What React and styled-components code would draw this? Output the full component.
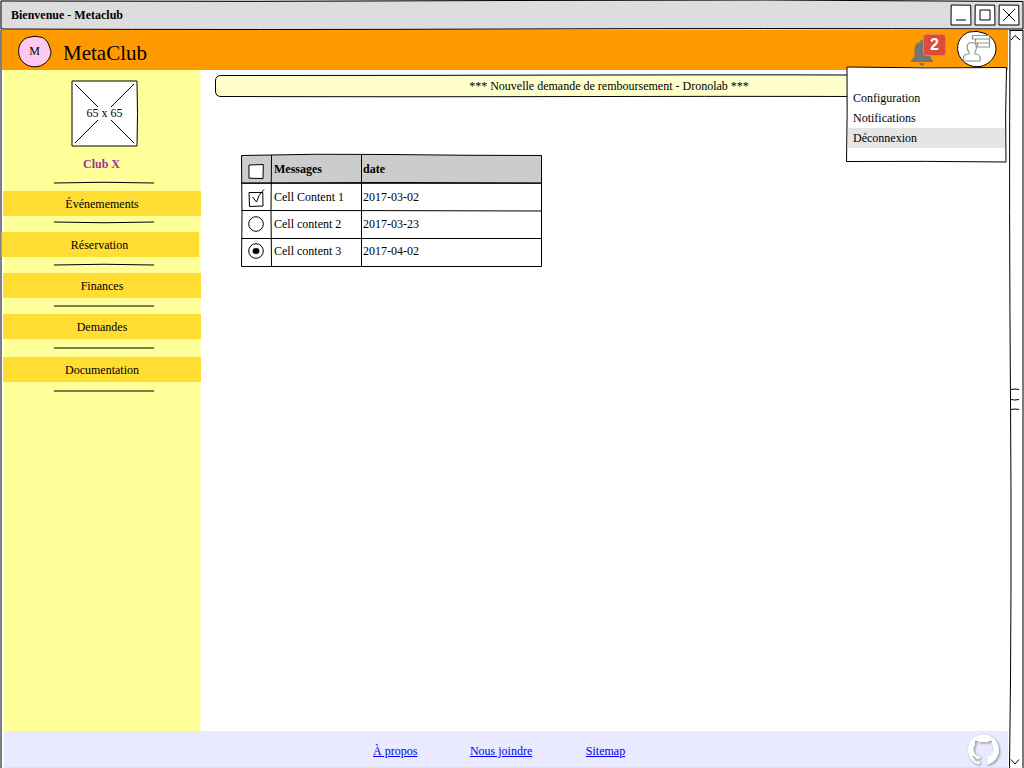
import React from 'react';
import styled, { createGlobalStyle } from 'styled-components';
import { SiGithub } from 'react-icons/si';

const GlobalStyle = createGlobalStyle`
  * { box-sizing: border-box; }
  body {
    margin: 0;
    overflow: hidden;
    background: #fff;
    color: #000;
    font-family: "Liberation Serif", "Times New Roman", serif;
    font-size: 12px;
  }
`;

const Window = styled.div`
  display: flex;
  flex-direction: column;
  width: 1024px;
  height: 768px;
  overflow: hidden;
  background: #fff;
`;

const TitleBar = styled.header`
  position: relative;
  flex: none;
  display: flex;
  align-items: center;
  justify-content: space-between;
  height: 30px;
  padding: 0 4px 0 11px;
  background: #ddd;
  font-weight: bold;
`;

const Controls = styled.div`
  position: relative;
  display: flex;
  gap: 2px;
`;

const Outline = styled.svg`
  position: absolute;
  top: 0;
  left: 0;
  fill: none;
  stroke: #000;
  stroke-width: 1;
  overflow: visible;
  pointer-events: none;
`;

const Drawing = styled.svg`
  display: block;
  flex: none;
  fill: none;
  stroke: #000;
  stroke-width: 1;
  overflow: visible;
`;

const Viewport = styled.div`
  display: flex;
  flex: 1;
  min-height: 0;
`;

const LeftFrame = styled.div`
  width: 2px;
  background: #7f7f7f;
`;

const Page = styled.div`
  display: flex;
  flex-direction: column;
  width: 1007px;
`;

const TopBar = styled.div`
  position: relative;
  z-index: 1;
  flex: none;
  display: flex;
  align-items: flex-start;
  width: 1006px;
  height: 40px;
  padding-left: 16px;
  background: #ff9900;
`;

const Logo = styled.div`
  position: relative;
  display: flex;
  justify-content: center;
  width: 33px;
  margin-top: 6px;
  line-height: 31px;
`;

const LogoLetter = styled.span`
  position: relative;
`;

const Brand = styled.div`
  margin-left: 12px;
  font-size: 21px;
  line-height: 46px;
`;

const Bell = styled.div`
  position: relative;
  margin: 9px 0 0 auto;
  width: 22px;
  height: 28px;
`;

const Badge = styled.div`
  position: absolute;
  top: -5px;
  left: 12px;
  width: 23px;
  height: 22px;
  border: 1px solid #f07a55;
  border-radius: 3px;
  background: #dd4b39;
  color: #fff;
  font: bold 16px/20px "Liberation Sans", sans-serif;
  text-align: center;
`;

const Avatar = styled.div`
  margin: 0 11px 0 24px;
`;

const Menu = styled.div`
  position: absolute;
  top: 37px;
  left: 845px;
  width: 160px;
  height: 95px;
  padding: 21px 2px 0 1px;
  background: #fff;
`;

const MenuItem = styled.div`
  height: 20px;
  padding-left: 5px;
  line-height: 20px;
  background: ${(p) => (p.$active ? '#e5e5e5' : 'transparent')};
`;

const Columns = styled.div`
  display: flex;
  flex: 1;
`;

const Sidebar = styled.aside`
  display: flex;
  flex-direction: column;
  width: 199px;
  padding-top: 11px;
  background: linear-gradient(to right, #fff 2px, #ffff99 2px, #ffff99 198px, #ffffcc 198px);
`;

const Picture = styled.div`
  position: relative;
  width: 65px;
  height: 65px;
  margin-left: 70px;
  background: #fff;
  line-height: 65px;
  text-align: center;
`;

const ClubName = styled.div`
  width: 199px;
  margin: 11px 0 12px;
  color: #993399;
  font-weight: bold;
  line-height: 14px;
  text-align: center;
`;

const Rule = styled(Drawing)`
  margin: -1px 0 -1px 52px;
`;

const NavItem = styled.a`
  height: 25px;
  margin: ${(p) => p.$before}px 0 ${(p) => p.$after}px ${(p) => (p.$shifted ? -1 : 1)}px;
  padding-right: ${(p) => (p.$shifted ? 1 : 0)}px;
  width: 198px;
  background: ${(p) => (p.$shifted ? 'linear-gradient(to right, #c0ad5b 1px, #ffdd33 1px)' : '#ffdd33')};
  line-height: 27px;
  text-align: center;
`;

const Content = styled.main`
  flex: 1;
  padding: 5px 0 0 14px;
`;

const Notice = styled.div`
  position: relative;
  width: 788px;
  height: 22px;
  border-radius: 6px;
  background: #ffffcc;
  line-height: 23px;
  text-align: center;
`;

const NoticeText = styled.span`
  position: relative;
`;

const Table = styled.div`
  position: relative;
  width: 300px;
  margin: 58px 0 0 26px;
`;

const Row = styled.div`
  display: grid;
  grid-template-columns: 30px 90px 180px;
  height: ${(p) => p.$h}px;
  line-height: ${(p) => p.$lh}px;
  background: ${(p) => (p.$head ? '#ccc' : '#fff')};
  font-weight: ${(p) => (p.$head ? 'bold' : 'normal')};
`;

const Cell = styled.div`
  padding-left: ${(p) => p.$pad}px;
`;

const Footer = styled.footer`
  position: relative;
  flex: none;
  display: flex;
  align-items: flex-start;
  width: 1004px;
  height: 37px;
  margin-left: 2px;
  padding-left: 369px;
  border-bottom: 1px solid #e2e2dc;
  background: #e9e9ff;
  line-height: 40px;
`;

const FooterLink = styled.a`
  margin-right: ${(p) => p.$gap}px;
  color: #0000ee;
  text-decoration: underline;
`;

const GithubMark = styled(SiGithub)`
  margin: 3px 9px 0 auto;
  width: 31px;
  height: 31px;
  color: #fff;
  filter: drop-shadow(1px 1px 1px #888);
`;

const ScrollBar = styled.div`
  position: relative;
  flex: 1;
  display: flex;
  flex-direction: column;
  justify-content: space-between;
  padding: 5px 0 3px 2px;
  border-right: 2px solid #7a7a7a;
`;

const WINDOW_ICONS = [
  'M5 15H15',
  'M5 5H15V15H5Z',
  'M4 4L16 16M16 4L4 16',
];

const NAV = [
  { label: 'Événemements', before: 8, after: 6, rule: 'M0 1Q50 2.5 100 1' },
  { label: 'Réservation', before: 10, after: 8, shifted: true, rule: 'M0 1Q50 -.5 100 1' },
  { label: 'Finances', before: 8, after: 8, rule: 'M0 1H100' },
  { label: 'Demandes', before: 8, after: 9, rule: 'M0 1H100' },
  { label: 'Documentation', before: 9, after: 9, rule: 'M0 1H100' },
];

const MARKS = {
  box: 'M8 10L22.300 9.500L22 23.500L8 23.200Z',
  tick: 'M8 9.500L21.800 9.500L22 23L8.500 23.500ZM11.500 14L15.500 19Q17 12 23 6.500',
};

function Mark({ kind }) {
  if (MARKS[kind]) {
    return (
      <Drawing width="30" height="27">
        <path fill={kind === 'box' ? '#fff' : 'none'} d={MARKS[kind]} />
      </Drawing>
    );
  }
  return (
    <Drawing width="30" height="27">
      <circle cx="15" cy="13" r="7.3" />
      {kind === 'radioOn' && <ellipse cx="15" cy="13" rx="3.4" ry="3" fill="#000" stroke="none" />}
    </Drawing>
  );
}

const ROWS = [
  { mark: 'box', a: 'Messages', b: 'date', h: 28, lh: 28, head: true },
  { mark: 'tick', a: 'Cell Content 1', b: '2017-03-02', h: 28, lh: 28 },
  { mark: 'radio', a: 'Cell content 2', b: '2017-03-23', h: 27, lh: 27 },
  { mark: 'radioOn', a: 'Cell content 3', b: '2017-04-02', h: 28, lh: 27 },
];

export default function App() {
  return (
    <>
      <GlobalStyle />
      <Window>
        <TitleBar>
          <Outline width="1024" height="30">
            <path d="M1 1Q256 2 512 .5T1023 1.5L1023 29Q760 28 512 29T1 29Z" />
          </Outline>
          <span>Bienvenue - Metaclub</span>
          <Controls>
            {WINDOW_ICONS.map((d) => (
              <Drawing key={d} width="22" height="22" viewBox="-1 -1 22 22">
                <path fill="#fff" d="M.2 0L19.7 .2L20 20L0 20Z" />
                <path d={d} />
              </Drawing>
            ))}
          </Controls>
        </TitleBar>
        <Viewport>
          <LeftFrame />
          <Page>
            <TopBar>
              <Logo>
                <Outline width="34" height="31">
                  <path fill="#ffc8f0" d="M9.500 1.500Q17 -1 24.500 1.500C30 4.500 31 9 33 15.500C33 23 27 29 20 30.500C12 32 5 28 2 22C-1 15 .5 5 9.500 1.500Z" />
                </Outline>
                <LogoLetter>M</LogoLetter>
              </Logo>
              <Brand>MetaClub</Brand>
              <Bell>
                <Drawing width="22" height="28">
                  <g fill="#757575" stroke="none">
                    <path d="M9.5 3V1.5Q11 0 12.5 1.5V3C18 4 19 8 19 12V15Q19 19 22 21.5V23H0V21.5Q3.5 19 3.5 15V11C3.5 6 5.500 4 9.500 3Z" />
                    <path d="M8 24H14Q13.500 26.700 11 26.700T8 24Z" />
                  </g>
                </Drawing>
                <Badge>2</Badge>
              </Bell>
              <Avatar>
                <Drawing width="40" height="38">
                  <path fill="#fff" d="M12 2Q20 0 28 3.500C36 7 39 13 39 19C39 27 32 35 23 36.500C12 38 3 31 1 22C-1 13 4 5 12 2Z" />
                  <g fill="#fff" stroke="#949494" strokeWidth="1.2">
                    <path d="M15.500 5.500H32.500V9H15.500ZM18.500 9H32.500V13H18.500ZM20.500 13H32.500V17H20.500Z" />
                    <path d="M12 22C9 19 9.500 12.500 14.500 12.500C20 12.500 20.500 18 18 22L18 24Q22.500 24.500 23.200 27V31H6.500V27Q7.500 24 12 24Z" />
                  </g>
                </Drawing>
              </Avatar>
              <Menu>
                <Outline width="160" height="95">
                  <path d="M0 0Q80 1.500 159.500 .5Q158 48 159 95Q80 94 -.5 94.500Q.5 48 0 0Z" />
                </Outline>
                <MenuItem>Configuration</MenuItem>
                <MenuItem>Notifications</MenuItem>
                <MenuItem $active>Déconnexion</MenuItem>
              </Menu>
            </TopBar>
            <Columns>
              <Sidebar>
                <Picture>
                  65 x 65
                  <Outline width="66" height="65">
                    <path d="M0 0H65Q66 33 65 65H0ZM3 3L26 26M39 26L62 3M3 62L26 39M39 39L62 62" />
                  </Outline>
                </Picture>
                <ClubName>Club X</ClubName>
                <Rule width="100" height="2"><path d="M0 1Q50 -.5 100 1" /></Rule>
                {NAV.map((n) => (
                  <React.Fragment key={n.label}>
                    <NavItem $before={n.before} $after={n.after} $shifted={n.shifted}>
                      {n.label}
                    </NavItem>
                    <Rule width="100" height="2"><path d={n.rule} /></Rule>
                  </React.Fragment>
                ))}
              </Sidebar>
              <Content>
                <Notice>
                  <Outline width="788" height="22">
                    <path d="M6 .5Q200 .5 390 0T782 .5Q788 .5 788 6V16Q788 22 782 22Q590 21 390 21.500T6 21.500Q.5 21.500 .5 16V6Q.5 .5 6 .5Z" />
                  </Outline>
                  <NoticeText>*** Nouvelle demande de remboursement - Dronolab ***</NoticeText>
                </Notice>
                <Table>
                  {ROWS.map((r) => (
                    <Row key={r.a} $h={r.h} $lh={r.lh} $head={r.head}>
                      <Mark kind={r.mark} />
                      <Cell $pad={3}>{r.a}</Cell>
                      <Cell $pad={2}>{r.b}</Cell>
                    </Row>
                  ))}
                  <Outline width="300" height="112">
                    <path d="M.5 .5Q75 -1.500 150 -.5T300.500 .5V111.500H.5L1 60L.5 .5M.5 28Q150 27 300.500 28M.5 28.300H300.500M.5 55.500Q150 55.500 300.500 56M.5 83.500H300.500M30.500 0Q29.500 56 30.500 111.500M120.500 0V111.500" />
                  </Outline>
                </Table>
              </Content>
            </Columns>
            <Footer>
              <FooterLink $gap={52.6}>À propos</FooterLink>
              <FooterLink $gap={53.6}>Nous joindre</FooterLink>
              <FooterLink $gap={0}>Sitemap</FooterLink>
              <GithubMark />
            </Footer>
          </Page>
          <ScrollBar>
            <Outline width="14" height="738">
              <path d="M.5 .5H14M1 0Q0 180 1.500 370T.5 738" />
            </Outline>
            <Drawing width="9" height="6"><path d="M0 5L4 .5L9 5" /></Drawing>
            <Drawing width="9" height="20">
              <path d="M0 -.5Q4 -1.500 8 -.5M0 9.500Q4 10.500 8 9.500M0 19.500Q4 18.500 8 19.500" />
            </Drawing>
            <Drawing width="9" height="6"><path d="M0 .5L4 5L8 .5" /></Drawing>
          </ScrollBar>
        </Viewport>
      </Window>
    </>
  );
}
